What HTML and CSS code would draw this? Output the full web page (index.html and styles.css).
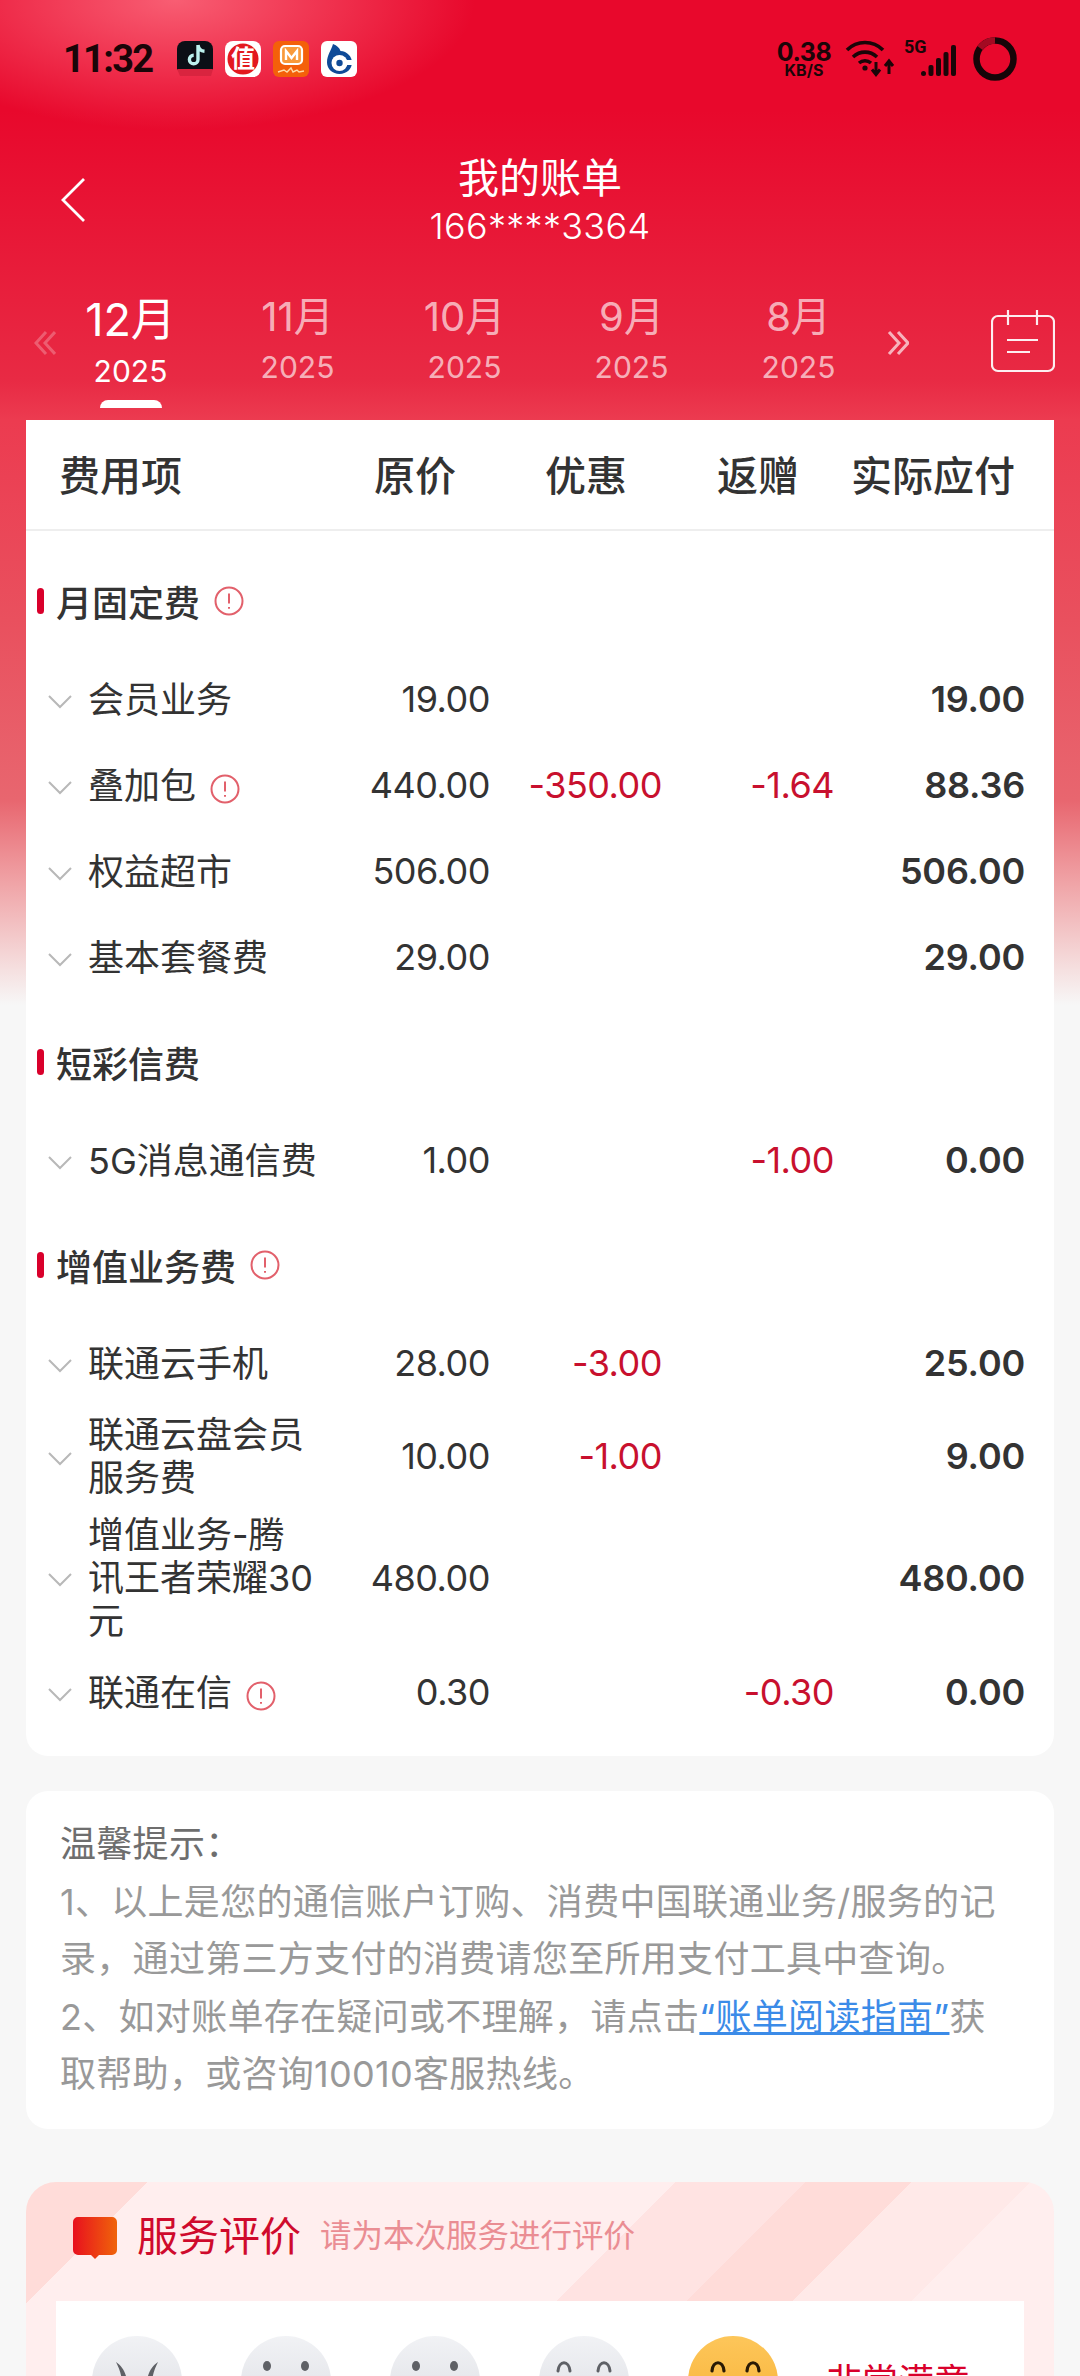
FILE: index.html
```html
<!DOCTYPE html>
<html lang="zh">
<head>
<meta charset="utf-8">
<title>我的账单</title>
<link rel="stylesheet" href="styles.css">
</head>
<body>
<div class="page">
  <div class="glow"></div>
  <header class="status">
    <span class="time">11:32</span>
    <div class="apps">
      <svg class="app" viewBox="0 0 36 36"><path d="M8 0h20a8 8 0 0 1 8 8v21H0V8a8 8 0 0 1 8-8z" fill="#0b0f16"/><path d="M0 28h36l-2 7H3z" fill="#d9243f"/><path d="M21 4v14.500a4.300 4.300 0 1 1-4.300-4.300M21 4c.6 3.800 2.800 6 6.500 6.300" fill="none" stroke="#bdf1ee" stroke-width="3.400"/></svg>
      <svg class="app" viewBox="0 0 36 36"><rect width="36" height="36" rx="8" fill="#fff"/><circle cx="18" cy="18" r="15.500" fill="#e3191f"/><text x="18" y="26" text-anchor="middle" class="app-zhi">值</text></svg>
      <svg class="app" viewBox="0 0 36 36"><rect width="36" height="36" rx="6" fill="#f4600a"/><path d="M12 5h13a4 4 0 0 1 4 4v10a4 4 0 0 1-4 4H12a4 4 0 0 1-4-4V9a4 4 0 0 1 4-4z" fill="#f99a3b" stroke="#fff" stroke-width="2.200"/><path d="M13 19V10l5.500 7 5.500-7v9" fill="none" stroke="#fff" stroke-width="2.400"/><path d="M5 31l6-2 3 2 4-4 2 4 4-2 2 2 5-1" fill="none" stroke="#ffdca8" stroke-width="1.400"/></svg>
      <svg class="app" viewBox="0 0 36 36"><rect width="36" height="36" rx="6" fill="#fff"/><path d="M12 3c4 1.500 6.500 4 7.500 7 6.500.4 11.500 5.500 11.500 11.500C31 28 25.500 33 18.500 33S6 28 6 21.500C6 14 10 10 12 3z" fill="#0f4a97"/><circle cx="18.500" cy="22" r="8" fill="#fff"/><circle cx="18.500" cy="22" r="3.200" fill="#0f4a97"/><path d="M22 19h9v5h-6z" fill="#fff"/></svg>
    </div>
    <div class="sys">
      <div class="speed"><span class="speed-num">0.38</span><span class="speed-unit">KB/S</span></div>
      <svg class="wifi" viewBox="0 0 50 40"><path d="M2 11C12 1 28 1 38 11M8 18c7-6.500 17-6.500 24 0M14 24c3.500-3 8.500-3 12 0" fill="none" stroke="#1a0508" stroke-width="3.600"/><circle cx="20" cy="29" r="2.600" fill="#1a0508"/><path d="M31 23v12M27 30.500l4 5 4-5M44 35V23M40 27l4-5 4 5" fill="none" stroke="#1a0508" stroke-width="3"/></svg>
      <div class="signal">
        <span class="five-g">5G</span>
        <svg class="bars" viewBox="0 0 35 31"><rect x="0" y="26" width="5" height="5" rx="2.500"/><rect x="7.500" y="20" width="5" height="11" rx="2"/><rect x="15" y="13" width="5" height="18" rx="2"/><rect x="22.500" y="7" width="5" height="24" rx="2"/><rect x="30" y="0" width="5" height="31" rx="2"/></svg>
      </div>
      <svg class="battery" viewBox="0 0 44 44"><circle cx="22" cy="22" r="18.500" fill="none" stroke="#170508" stroke-width="6.500"/><path d="M22 3.500a18.500 18.500 0 0 0-15 7.500" fill="none" stroke="#a30a22" stroke-width="6.500"/></svg>
    </div>
  </header>

  <div class="title-bar">
    <svg class="back" viewBox="0 0 26 46"><path d="M24 2 3 23l21 21" fill="none" stroke="#fff" stroke-width="2.800"/></svg>
    <div class="title-text">
      <div class="title">我的账单</div>
      <div class="phone">166****3364</div>
    </div>
  </div>

  <nav class="tabs">
    <svg class="dbl dbl-left" viewBox="0 0 22 26"><path d="M12 2 2 13l10 11M21 2 11 13l10 11" fill="none" stroke="#fff" stroke-width="3"/></svg>
    <div class="tab tab-on"><span class="m">12月</span><span class="y">2025</span><span class="mark"></span></div>
    <div class="tab"><span class="m">11月</span><span class="y">2025</span></div>
    <div class="tab"><span class="m">10月</span><span class="y">2025</span></div>
    <div class="tab"><span class="m">9月</span><span class="y">2025</span></div>
    <div class="tab"><span class="m">8月</span><span class="y">2025</span></div>
    <svg class="dbl dbl-right" viewBox="0 0 22 26"><path d="M2 2l10 11L2 24M11 2l10 11-10 11" fill="none" stroke="#fff" stroke-width="3"/></svg>
    <svg class="cal" viewBox="0 0 64 64"><path d="M7 7h50a6 6 0 0 1 6 6v43a6 6 0 0 1-6 6H7a6 6 0 0 1-6-6V13a6 6 0 0 1 6-6zM17 1v15M46 1v15M16 31h31M16 43h23" fill="none" stroke="#fff" stroke-width="2.200"/></svg>
  </nav>

  <section class="card bill">
    <div class="bill-head">
      <span class="h-name">费用项</span>
      <span class="h-c1">原价</span>
      <span class="h-c2">优惠</span>
      <span class="h-c3">返赠</span>
      <span class="h-c4">实际应付</span>
    </div>

    <div class="sec sec-first"><i class="sec-bar"></i><span>月固定费</span><svg class="info" viewBox="0 0 30 30"><circle cx="15" cy="15" r="13.500"/><path d="M15 7.500v10M15 21v1.800"/></svg></div>
    <div class="row"><svg class="chev" viewBox="0 0 24 14"><path d="M1 1l11 11L23 1"/></svg><div class="name">会员业务</div><div class="num">19.00</div><div class="num"></div><div class="num"></div><div class="num pay">19.00</div></div>
    <div class="row"><svg class="chev" viewBox="0 0 24 14"><path d="M1 1l11 11L23 1"/></svg><div class="name">叠加包<svg class="info info-inline" viewBox="0 0 30 30"><circle cx="15" cy="15" r="13.500"/><path d="M15 7.500v10M15 21v1.800"/></svg></div><div class="num">440.00</div><div class="num neg">-350.00</div><div class="num neg">-1.64</div><div class="num pay">88.36</div></div>
    <div class="row"><svg class="chev" viewBox="0 0 24 14"><path d="M1 1l11 11L23 1"/></svg><div class="name">权益超市</div><div class="num">506.00</div><div class="num"></div><div class="num"></div><div class="num pay">506.00</div></div>
    <div class="row"><svg class="chev" viewBox="0 0 24 14"><path d="M1 1l11 11L23 1"/></svg><div class="name">基本套餐费</div><div class="num">29.00</div><div class="num"></div><div class="num"></div><div class="num pay">29.00</div></div>

    <div class="sec"><i class="sec-bar"></i><span>短彩信费</span></div>
    <div class="row"><svg class="chev" viewBox="0 0 24 14"><path d="M1 1l11 11L23 1"/></svg><div class="name">5G消息通信费</div><div class="num">1.00</div><div class="num"></div><div class="num neg">-1.00</div><div class="num pay">0.00</div></div>

    <div class="sec"><i class="sec-bar"></i><span>增值业务费</span><svg class="info" viewBox="0 0 30 30"><circle cx="15" cy="15" r="13.500"/><path d="M15 7.500v10M15 21v1.800"/></svg></div>
    <div class="row"><svg class="chev" viewBox="0 0 24 14"><path d="M1 1l11 11L23 1"/></svg><div class="name">联通云手机</div><div class="num">28.00</div><div class="num neg">-3.00</div><div class="num"></div><div class="num pay">25.00</div></div>
    <div class="row"><svg class="chev" viewBox="0 0 24 14"><path d="M1 1l11 11L23 1"/></svg><div class="name">联通云盘会员服务费</div><div class="num">10.00</div><div class="num neg">-1.00</div><div class="num"></div><div class="num pay">9.00</div></div>
    <div class="row"><svg class="chev" viewBox="0 0 24 14"><path d="M1 1l11 11L23 1"/></svg><div class="name">增值业务-腾讯王者荣耀30元</div><div class="num">480.00</div><div class="num"></div><div class="num"></div><div class="num pay">480.00</div></div>
    <div class="row"><svg class="chev" viewBox="0 0 24 14"><path d="M1 1l11 11L23 1"/></svg><div class="name">联通在信<svg class="info info-inline" viewBox="0 0 30 30"><circle cx="15" cy="15" r="13.500"/><path d="M15 7.500v10M15 21v1.800"/></svg></div><div class="num">0.30</div><div class="num"></div><div class="num neg">-0.30</div><div class="num pay">0.00</div></div>
  </section>

  <section class="card tips">
    <p class="tips-lead">温馨提示：</p>
    <p>1、以上是您的通信账户订购、消费中国联通业务/服务的记录，通过第三方支付的消费请您至所用支付工具中查询。</p>
    <p>2、如对账单存在疑问或不理解，请点击<a class="link">“账单阅读指南”</a>获取帮助，或咨询10010客服热线。</p>
  </section>

  <section class="rate">
    <div class="rate-head">
      <svg class="bubble" viewBox="0 0 44 42"><defs><linearGradient id="bub" x1="0" x2="1" y1="0" y2="0"><stop offset="0" stop-color="#e8101e"/><stop offset="1" stop-color="#f0640a"/></linearGradient></defs><path d="M5 0h34a5 5 0 0 1 5 5v28a5 5 0 0 1-5 5H26l-4 4-4-4H5a5 5 0 0 1-5-5V5a5 5 0 0 1 5-5z" fill="url(#bub)"/></svg>
      <span class="rate-title">服务评价</span>
      <span class="rate-sub">请为本次服务进行评价</span>
    </div>
    <div class="rate-panel">
      <div class="face face-grey"><svg viewBox="0 0 90 90"><path d="M24 26c6 4 11 11 11 22h-5c0-9-3-16-6-22zM66 26c-6 4-11 11-11 22h5c0-9 3-16 6-22z" fill="#5f6166"/></svg></div>
      <div class="face face-grey"><svg viewBox="0 0 90 90"><ellipse cx="26" cy="30" rx="4" ry="5" fill="#5f6166"/><ellipse cx="64" cy="30" rx="4" ry="5" fill="#5f6166"/></svg></div>
      <div class="face face-grey"><svg viewBox="0 0 90 90"><ellipse cx="26" cy="30" rx="4" ry="5" fill="#5f6166"/><ellipse cx="64" cy="30" rx="4" ry="5" fill="#5f6166"/></svg></div>
      <div class="face face-grey"><svg viewBox="0 0 90 90"><path d="M19 35c1-11 11-11 12 0M59 35c1-11 11-11 12 0" fill="none" stroke="#5f6166" stroke-width="3" stroke-linecap="round"/></svg></div>
      <div class="face face-on"><svg viewBox="0 0 90 90"><path d="M24 35c1-11 11-11 12 0M59 35c1-11 11-11 12 0" fill="none" stroke="#2a1a05" stroke-width="3.200" stroke-linecap="round"/></svg></div>
      <span class="rate-label">非常满意</span>
    </div>
  </section>
</div>
</body>
</html>
```
FILE: styles.css
```css
* { box-sizing: border-box; }
html, body { margin: 0; padding: 0; height: 2376px; overflow: hidden; }
body { font-family: Inter, "Noto Sans CJK SC", sans-serif; color: #333; background: #f7f7f7; }
.page { position: relative; width: 1080px; height: 2376px; overflow: hidden; background: #f7f7f7; }
.glow {
  position: absolute; left: 0; top: 0; width: 1080px; height: 1010px;
  background:
    radial-gradient(ellipse 300px 130px at 175px 0, rgba(255,130,145,.7), rgba(255,120,140,0) 100%),
    linear-gradient(180deg, #e8082c 0, #e8082c 110px, #e82a44 380px, #ec3b50 420px, #e9505e 620px, #e8666f 800px, #f0a5a8 885px, #f5e0e0 970px, #f7f7f7 1005px);
}
.status, .title-bar, .tabs, .card, .rate { position: relative; }

.status { height: 118px; display: flex; align-items: center; padding: 0 0 0 63px; }
.time { font-size: 38px; font-weight: 700; color: #1a0508; width: 114px; letter-spacing: -1.700px; font-family: Roboto, sans-serif; }
.apps { display: flex; gap: 12px; }
.app { width: 36px; height: 36px; display: block; }
.app-zhi { font-size: 24px; font-weight: 700; fill: #fff; font-family: "Noto Sans CJK SC", sans-serif; }
.sys { display: flex; align-items: center; margin-left: auto; padding-right: 63px; }
.speed { display: flex; flex-direction: column; align-items: center; width: 56px; color: #1a0508; font-family: Inter, sans-serif; font-weight: 700; }
.speed-num { font-size: 25px; line-height: 22px; letter-spacing: -.5px; }
.speed-unit { font-size: 16px; line-height: 15px; }
.wifi { width: 50px; height: 40px; margin-left: 13px; }
.signal { position: relative; width: 52px; height: 36px; margin-left: 9px; }
.five-g { position: absolute; left: 0; top: -4px; font: 700 18px/20px Roboto, sans-serif; color: #1a0508; }
.bars { position: absolute; right: 0; top: 4px; width: 35px; height: 31px; fill: #1a0508; }
.battery { width: 44px; height: 44px; margin-left: 17px; }

.title-bar { height: 132px; display: flex; justify-content: center; }
.back { position: absolute; left: 60px; top: 59px; width: 26px; height: 46px; }
.title-text { text-align: center; color: #fff; padding-top: 33px; }
.title { font-size: 41px; line-height: 54px; }
.phone { font-size: 36px; line-height: 42px; font-weight: 300; letter-spacing: .3px; }

.tabs { height: 170px; display: flex; padding-left: 47px; }
.dbl { position: absolute; width: 22px; height: 26px; top: 80px; opacity: .65; }
.dbl-left { left: 34px; opacity: .25; }
.dbl-right { left: 887px; }
.cal { position: absolute; left: 991px; top: 59px; width: 64px; height: 64px; opacity: .92; }
.tab { width: 167px; position: relative; display: flex; flex-direction: column; align-items: center; color: rgba(255,255,255,.65); padding-top: 42px; }
.m { font-size: 40px; line-height: 50px; }
.y { font-size: 30px; line-height: 36px; margin-top: 7px; }
.tab-on { color: #fff; padding-top: 43px; }
.tab-on .m { font-size: 45px; line-height: 54px; }
.tab-on .y { margin-top: 6px; }
.mark { position: absolute; left: 53px; top: 150px; width: 62px; height: 8px; background: #fff; border-radius: 8px 8px 0 0; }

.card { margin: 0 26px; background: #fff; }
.bill { border-radius: 0 0 22px 22px; padding-bottom: 22px; }
.bill-head { height: 111px; border-bottom: 2px solid #eeeeee; display: flex; align-items: center; padding: 0 0 3px 34px; font-size: 41px; font-weight: 500; color: #333; text-align: center; }
.h-name { width: 279px; text-align: left; margin-left: -1px; }
.h-c1 { width: 154px; }
.h-c2 { width: 188px; }
.h-c3 { width: 156px; }
.h-c4 { width: 194px; }

.sec { height: 48px; margin-top: 40px; margin-bottom: 29px; padding-bottom: 2px; display: flex; align-items: center; padding-left: 11px; font-size: 36px; font-weight: 500; color: #333; }
.sec-first { margin-top: 47px; }
.sec-bar { width: 7px; height: 26px; border-radius: 4px; background: #d9002b; margin-right: 12px; }
.info { width: 30px; height: 30px; margin-left: 14px; fill: none; stroke: #e2606b; stroke-width: 2; }
.info-inline { vertical-align: -5px; margin-left: 14px; }

.row { display: grid; grid-template-columns: 62px 229px 173px 172px 172px 191px; align-items: center; min-height: 86px; padding: 7px 0; }
.chev { width: 24px; height: 14px; margin-left: 22px; margin-top: 7px; fill: none; stroke: #b8b8b8; stroke-width: 2; }
.name { font-size: 36px; line-height: 43px; color: #333; transform: translateY(2px); }
.num { font-size: 36px; text-align: right; color: #333; letter-spacing: -.5px; transform: translateY(1px); }
.pay { font-weight: 600; letter-spacing: -.2px; }
.neg { color: #c8102e; }

.tips { margin-top: 35px; border-radius: 22px; height: 338px; padding: 25px 38px 0 34px; font-size: 36px; line-height: 57.500px; color: #999; letter-spacing: .3px; }
.tips p { margin: 0; }
.tips .tips-lead { color: #6e6e6e; }
.link { color: #3b8be8; text-decoration: underline; }

.rate { margin: 53px 26px 0; height: 300px; border-radius: 30px 30px 0 0; overflow: hidden;
  background: linear-gradient(135deg, #ffdcd9 86px, #ffeeee 86px, #ffeeee 459px, #ffe3e2 459px, #ffe3e2 551px, #ffdcd9 551px, #ffdcd9 626px, #ffe9e8 626px, #ffe9e8 710px, #ffeeee 710px);
  padding: 34px 30px 0; }
.rate-head { height: 85px; display: flex; align-items: flex-start; }
.bubble { width: 44px; height: 42px; margin-left: 17px; margin-top: 1px; }
.rate-title { font-size: 41px; line-height: 40px; color: #cf0a2c; margin-left: 20px; }
.rate-sub { font-size: 31.500px; line-height: 40px; color: #ea8d93; margin-left: 19px; }
.rate-panel { background: #fff; height: 200px; padding: 35px 0 0 36px; display: flex; gap: 59px; align-items: flex-start; }
.face { width: 90px; height: 90px; border-radius: 50%; flex: none; }
.face svg { display: block; width: 90px; height: 90px; }
.face-grey { background: linear-gradient(180deg, #f1f2f5, #dcdee3); }
.face-on { background: linear-gradient(180deg, #fdc65a, #f8b133); }
.rate-label { font-size: 36px; line-height: 44px; color: #d9002b; margin-left: -11px; padding-top: 24px; }
```
